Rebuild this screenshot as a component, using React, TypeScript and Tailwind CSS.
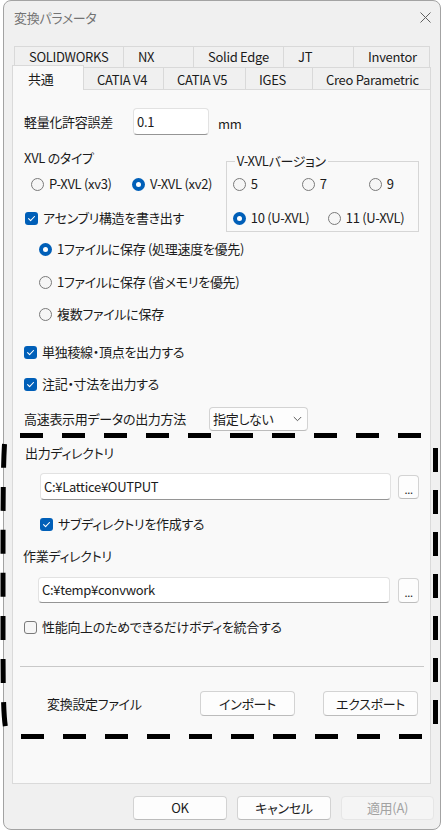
import React from 'react';

const Check = ({ checked }: { checked: boolean }) =>
  checked ? (
    <span className="flex h-[13px] w-[13px] shrink-0 items-center justify-center rounded-[3px] bg-[#005fb8]">
      <svg width="9" height="9" viewBox="0 0 9 9" fill="none">
        <path d="M1.6 4.7L3.6 6.7L7.5 2.5" stroke="#fff" strokeWidth="1.1" strokeLinecap="round" strokeLinejoin="round" />
      </svg>
    </span>
  ) : (
    <span className="h-[13px] w-[13px] shrink-0 rounded-[3px] border border-[#7a7a7a] bg-[#f6f6f6]" />
  );

const Radio = ({ checked }: { checked: boolean }) =>
  checked ? (
    <span className="flex h-[13px] w-[13px] shrink-0 items-center justify-center rounded-full bg-[#005fb8]">
      <span className="h-[5px] w-[5px] rounded-full bg-white" />
    </span>
  ) : (
    <span className="h-[13px] w-[13px] shrink-0 rounded-full border border-[#7a7a7a] bg-[#f6f6f6]" />
  );

const Opt = ({ radio, checked, label, className = '' }: { radio?: boolean; checked: boolean; label: string; className?: string }) => (
  <div className={`flex h-[20px] items-center gap-[5px] ${className}`}>
    {radio ? <Radio checked={checked} /> : <Check checked={checked} />}
    <span className="whitespace-nowrap leading-[20px]">{label}</span>
  </div>
);

const row1 = [
  { t: 'SOLIDWORKS', c: 'w-[110px]' },
  { t: 'NX', c: 'w-[71px] -ml-px' },
  { t: 'Solid Edge', c: 'w-[91px] -ml-px' },
  { t: 'JT', c: 'w-[71px] -ml-px' },
  { t: 'Inventor', c: 'w-[77px] -ml-px' },
];

const row2 = [
  { t: 'CATIA V4', c: 'w-[81px]' },
  { t: 'CATIA V5', c: 'w-[83px]' },
  { t: 'IGES', c: 'w-[68px]' },
  { t: 'Creo Parametric', c: 'w-[119px]' },
];

const btn = 'flex items-center justify-center rounded-[4px] border border-[#d3d3d3] border-b-[#bcbcbc] bg-[#fdfdfd]';
const field = 'flex items-center rounded-[4px] border border-[#e2e2e2] border-b-[#959595] bg-white';

export default function App() {
  return (
    <div className="relative h-[832px] w-[443px] overflow-hidden bg-white pl-[3px] font-['Noto_Sans_CJK_JP',sans-serif] text-[13px] tracking-[-0.3px] text-[#1b1b1b] [font-feature-settings:'palt']">
      <div className="flex h-[830px] w-[438px] flex-col rounded-[8px] border border-[#a3a3a3] bg-[#f0f0f0]">
        {/* title bar */}
        <div className="flex h-[45px] shrink-0 items-start justify-between pl-[10px] pr-[9px] pt-[8px]">
          <span className="leading-[18px] text-[#747474]">変換パラメータ</span>
          <svg width="11" height="11" viewBox="0 0 11 11" className="mt-[3px]">
            <path d="M0.5 0.5L10.5 10.5M10.5 0.5L0.5 10.5" stroke="#5f5f5f" strokeWidth="1" />
          </svg>
        </div>

        {/* tabs */}
        <div className="ml-[10px] flex h-[21px] shrink-0">
          {row1.map((r) => (
            <div key={r.t} className={`flex items-center border border-b-0 border-[#d9d9d9] bg-[#f0f0f0] pl-[14px] ${r.c}`}>
              {r.t}
            </div>
          ))}
        </div>
        <div className="ml-[8px] flex h-[22px] shrink-0 items-end">
          <div className="relative z-10 -mb-px flex h-[25px] w-[72px] items-center border border-b-0 border-[#d9d9d9] bg-[#f9f9f9] pl-[15px] pt-[1px]">
            共通
          </div>
          {row2.map((r) => (
            <div key={r.t} className={`-ml-px flex h-[22px] items-center border border-b-0 border-[#d9d9d9] bg-[#f0f0f0] pl-[13px] pt-[2px] ${r.c}`}>
              {r.t}
            </div>
          ))}
        </div>

        {/* tab page */}
        <div className="ml-[8px] h-[695px] w-[419px] shrink-0 border border-[#dadada] bg-[#f9f9f9] px-[11px]">
          <div className="mt-[18px] flex h-[27px] items-end">
            <span className="w-[109px] self-center leading-[20px]">軽量化許容誤差</span>
            <div className={`h-[27px] w-[76px] pl-[3px] ${field}`}>0.1</div>
            <span className="ml-[9px] mb-px leading-[20px]">mm</span>
          </div>

          <div className="mt-[13px] flex h-[84px]">
            <div className="w-[206px]">
              <div className="h-[20px] leading-[20px]">XVL のタイプ</div>
              <div className="mt-[6px] flex pl-[7px]">
                <Opt radio checked={false} label="P-XVL (xv3)" className="w-[101px]" />
                <Opt radio checked label="V-XVL (xv2)" />
              </div>
              <Opt checked label="アセンブリ構造を書き出す" className="mt-[14px] pl-px" />
            </div>
            <fieldset className="mt-[6px] h-[78px] w-[197px] border border-[#d6d6d6] px-[6px]">
              <legend className="ml-[2px] px-[2px] leading-[14px]">V-XVLバージョン</legend>
              <div className="mt-[6px] flex">
                <Opt radio checked={false} label="5" className="w-[69px]" />
                <Opt radio checked={false} label="7" className="w-[67px]" />
                <Opt radio checked={false} label="9" />
              </div>
              <div className="mt-[14px] flex">
                <Opt radio checked label="10 (U-XVL)" className="w-[95px]" />
                <Opt radio checked={false} label="11 (U-XVL)" />
              </div>
            </fieldset>
          </div>

          <Opt radio checked label="1ファイルに保存 (処理速度を優先)" className="mt-[7px] pl-[15px]" />
          <Opt radio checked={false} label="1ファイルに保存 (省メモリを優先)" className="mt-[13px] pl-[15px]" />
          <Opt radio checked={false} label="複数ファイルに保存" className="mt-[12px] pl-[15px]" />

          <Opt checked label="単独稜線・頂点を出力する" className="mt-[18px]" />
          <Opt checked label="注記・寸法を出力する" className="mt-[12px]" />

          <div className="mt-[13px] flex h-[24px] items-center">
            <span className="w-[185px] leading-[20px]">高速表示用データの出力方法</span>
            <div className="flex h-[24px] w-[99px] items-center justify-between rounded-[4px] border border-[#d3d3d3] border-b-[#bcbcbc] bg-[#fdfdfd] pl-[3px] pr-[5px]">
              <span>指定しない</span>
              <svg width="9" height="6" viewBox="0 0 9 6" fill="none">
                <path d="M0.8 1L4.5 4.7L8.2 1" stroke="#5a5a5a" strokeWidth="1" />
              </svg>
            </div>
          </div>

          <div className="mt-[12px] h-[20px] pl-px leading-[20px]">出力ディレクトリ</div>
          <div className="mt-[10px] flex h-[27px] items-center pl-[16px]">
            <div className={`h-[27px] w-[353px] pl-[3px] ${field}`}>C:¥Lattice¥OUTPUT</div>
            <div className={`ml-[7px] h-[24px] w-[21px] pt-[5px] text-[11px] ${btn}`}>...</div>
          </div>
          <Opt checked label="サブディレクトリを作成する" className="mt-[14px] pl-[16px]" />

          <div className="mt-[12px] -ml-px h-[20px] leading-[20px]">作業ディレクトリ</div>
          <div className="mt-[11px] flex h-[26px] items-center pl-[14px]">
            <div className={`h-[26px] w-[353px] pl-[3px] ${field}`}>C:¥temp¥convwork</div>
            <div className={`ml-[8px] h-[25px] w-[21px] pt-[5px] text-[11px] ${btn}`}>...</div>
          </div>
          <Opt checked={false} label="性能向上のためできるだけボディを統合する" className="mt-[14px]" />

          <div className="-ml-[4px] mt-[29px] h-px w-[404px] bg-[#c9c9c9]" />

          <div className="mt-[24px] flex h-[25px] items-center pl-[23px]">
            <span className="w-[153px] leading-[20px]">変換設定ファイル</span>
            <div className={`h-[25px] w-[95px] ${btn}`}>インポート</div>
            <div className={`ml-[28px] h-[25px] w-[95px] ${btn}`}>エクスポート</div>
          </div>
        </div>

        {/* dialog buttons */}
        <div className="ml-[129px] mt-[12px] flex h-[24px] gap-[10px]">
          <div className={`h-[24px] w-[94px] ${btn}`}>OK</div>
          <div className={`h-[24px] w-[94px] ${btn}`}>キャンセル</div>
          <div className="flex h-[24px] w-[93px] items-center justify-center rounded-[4px] border border-[#e6e6e6] bg-[#f5f5f5] text-[#a2a2a2]">
            適用(A)
          </div>
        </div>
      </div>

      {/* dashed annotation */}
      <svg className="pointer-events-none absolute left-0 top-0" width="443" height="832" viewBox="0 0 443 832" fill="none">
        <path d="M20 435.5H424" stroke="#000" strokeWidth="5" strokeDasharray="23 19" />
        <path d="M21 736.5H424" stroke="#000" strokeWidth="5" strokeDasharray="23 19" />
        <path d="M4.5 444C3 470 3 500 3 600C3 690 3 715 6 730" stroke="#000" strokeWidth="5" strokeDasharray="24 19" />
        <path d="M435.5 448V724" stroke="#000" strokeWidth="5" strokeDasharray="24 18" />
      </svg>
    </div>
  );
}
